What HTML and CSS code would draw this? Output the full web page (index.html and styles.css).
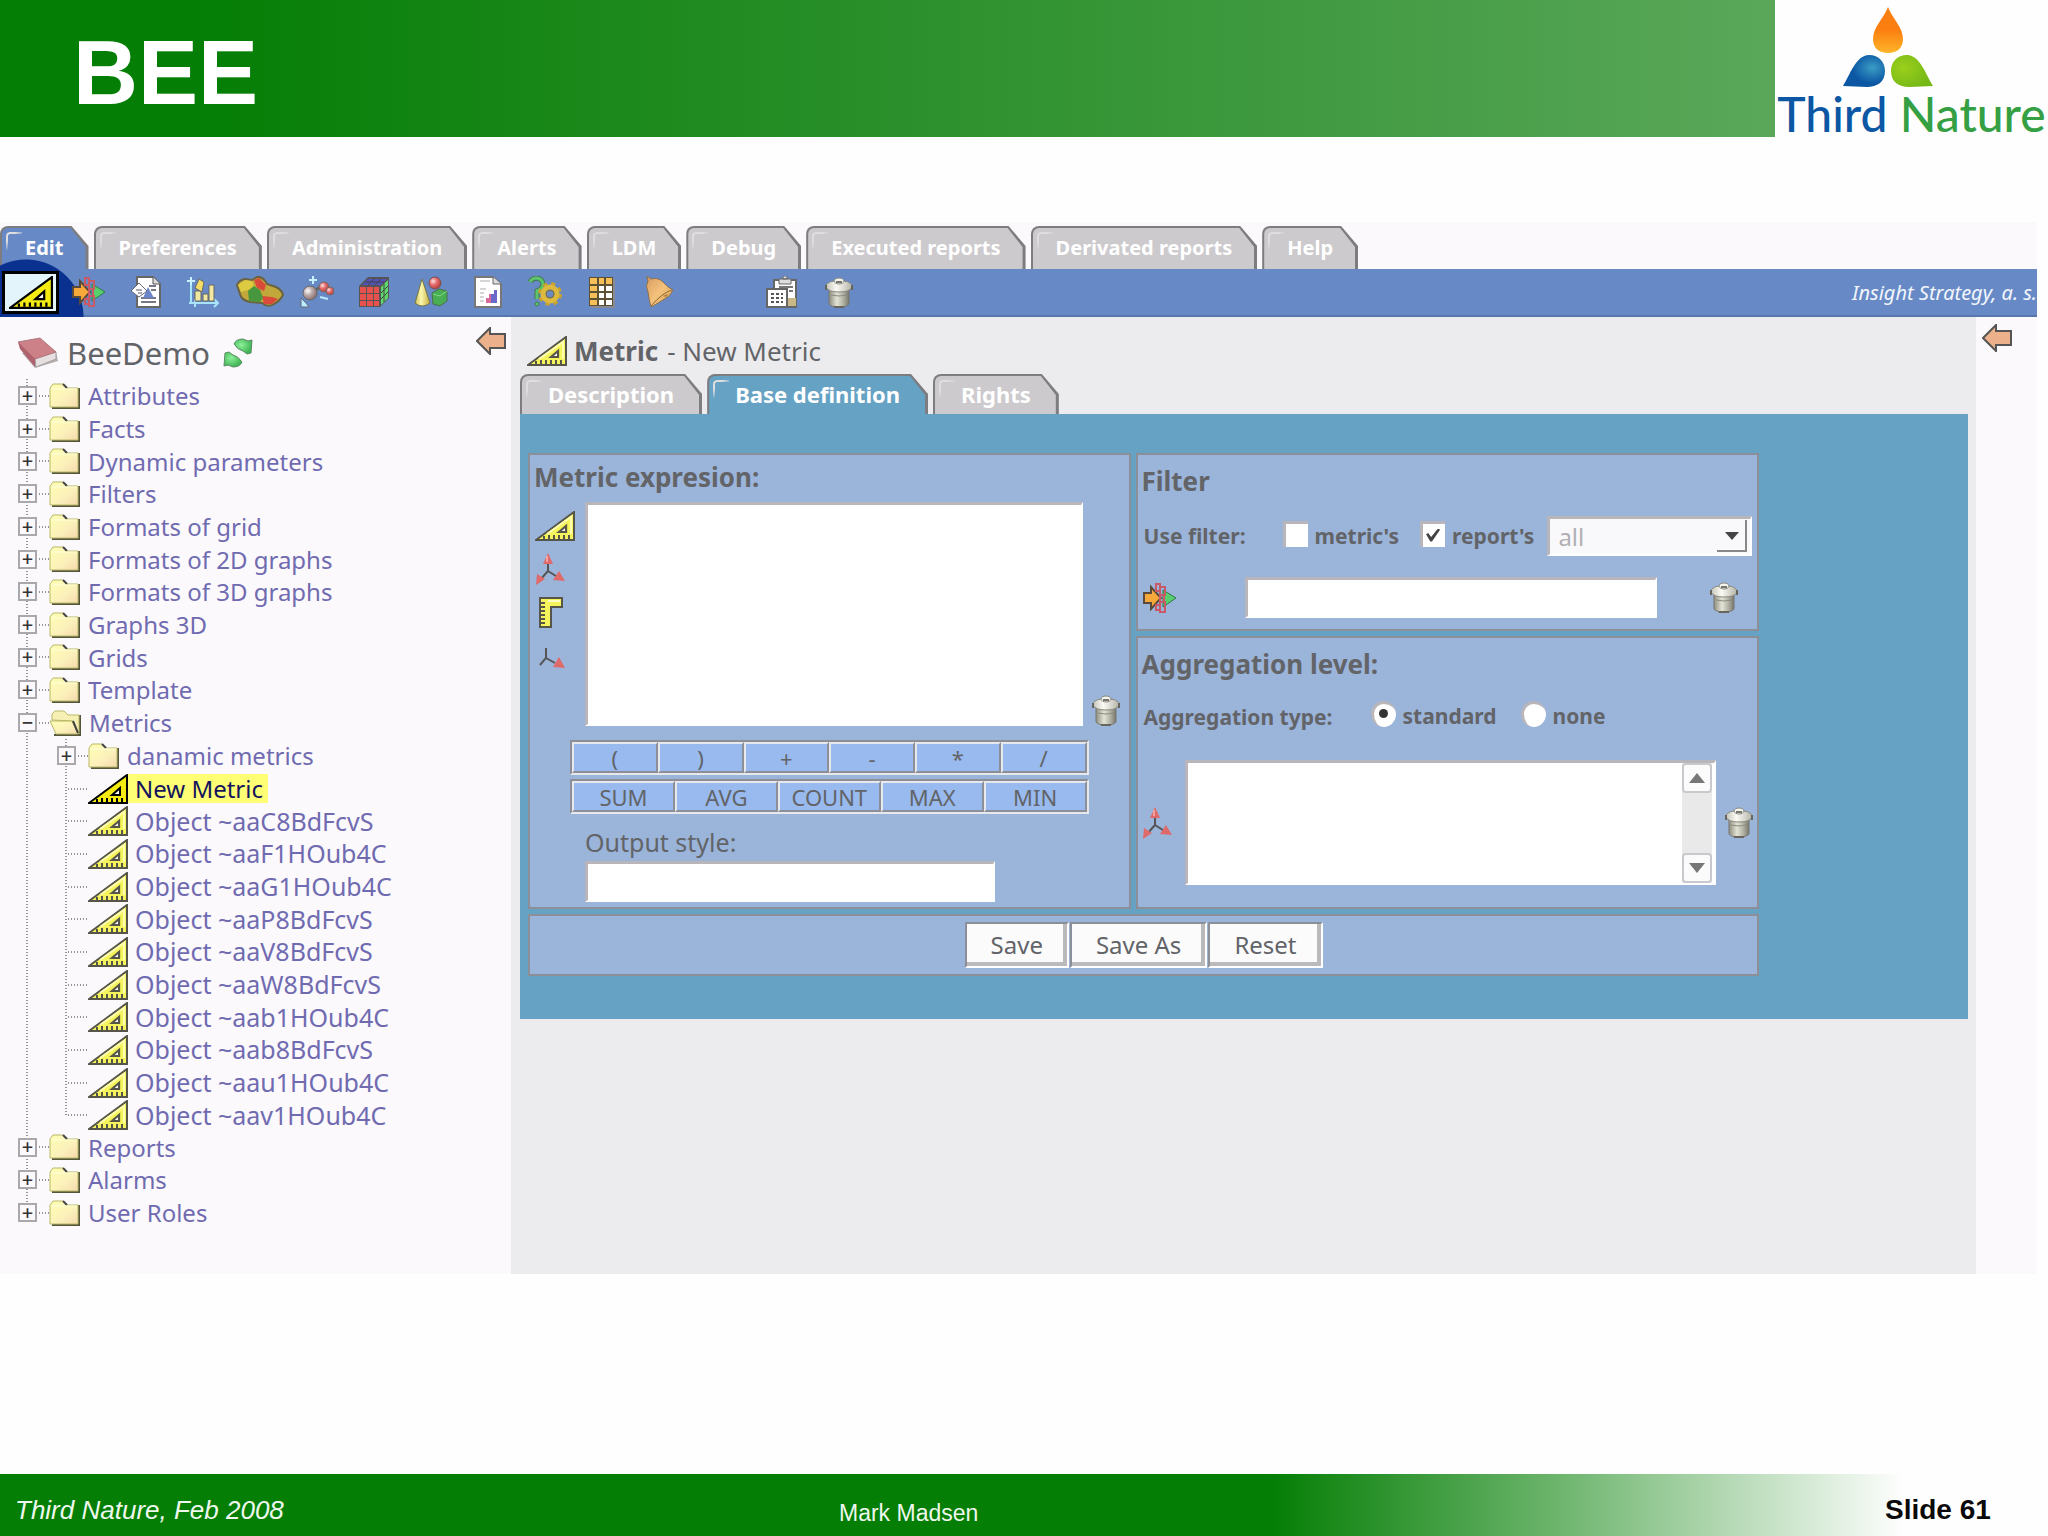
FILE: index.html
```html
<!DOCTYPE html>
<html lang="en">
<head>
<meta charset="utf-8">
<title>BEE - Slide 61</title>
<link rel="stylesheet" href="styles.css">
</head>
<body>
<svg class="defs" aria-hidden="true">
  <defs>
    <linearGradient id="g-orange" x1="0" y1="0" x2="0" y2="1"><stop offset="0.5" stop-color="#fb7f10"/><stop offset="1" stop-color="#fdb52a"/></linearGradient>
    <radialGradient id="g-blue" cx="0.7" cy="0.4" r="0.6"><stop offset="0" stop-color="#3b9cc4"/><stop offset="0.8" stop-color="#0b57a4"/></radialGradient>
    <radialGradient id="g-green" cx="0.3" cy="0.4" r="0.7"><stop offset="0" stop-color="#9bcf1c"/><stop offset="1" stop-color="#74b816"/></radialGradient>
    <linearGradient id="g-folder" x1="0" y1="0" x2="1" y2="1"><stop offset="0" stop-color="#ffffb4"/><stop offset="0.6" stop-color="#fbf0ba"/><stop offset="1" stop-color="#f5d8ae"/></linearGradient>
    <linearGradient id="g-can" x1="0" y1="0" x2="1" y2="0"><stop offset="0" stop-color="#8d8d80"/><stop offset="0.4" stop-color="#e4e4d6"/><stop offset="0.7" stop-color="#b4b4a6"/><stop offset="1" stop-color="#77776e"/></linearGradient>
    <linearGradient id="g-lid" x1="0" y1="0" x2="1" y2="0"><stop offset="0" stop-color="#c4c4b8"/><stop offset="0.4" stop-color="#fbfbf4"/><stop offset="1" stop-color="#b4b4a8"/></linearGradient>
    <linearGradient id="g-bell" x1="0" y1="0" x2="1" y2="1"><stop offset="0" stop-color="#d99a62"/><stop offset="0.5" stop-color="#f4c27c"/><stop offset="1" stop-color="#d8a04c"/></linearGradient>
    <radialGradient id="g-leaf" cx="0.4" cy="0.4" r="0.6"><stop offset="0" stop-color="#8cf09a"/><stop offset="1" stop-color="#3fb454"/></radialGradient>
    <radialGradient id="g-red" cx="0.35" cy="0.35" r="0.65"><stop offset="0" stop-color="#ffe0e0"/><stop offset="0.5" stop-color="#e46a6a"/><stop offset="1" stop-color="#b84444"/></radialGradient>
    <radialGradient id="g-gray" cx="0.35" cy="0.35" r="0.65"><stop offset="0" stop-color="#fff"/><stop offset="0.5" stop-color="#bba8a8"/><stop offset="1" stop-color="#8a7474"/></radialGradient>
    <linearGradient id="g-cone" x1="0" y1="0" x2="1" y2="0"><stop offset="0" stop-color="#c8b848"/><stop offset="0.4" stop-color="#fdf8b0"/><stop offset="1" stop-color="#c4ae3c"/></linearGradient>
  </defs>
  <symbol id="i-metric" viewBox="0 0 40 30">
    <path d="M1 29 39 1V29Z" fill="#f6f45c" stroke="#55554a" stroke-width="2"/>
    <path d="M12 23 36 6V23" fill="none" stroke="#fffeb0" stroke-width="2"/>
    <path d="M20 22 33 12V22Z" fill="#dedc50"/>
    <path d="M24 21 31 15V21Z" fill="#fbf9fc" stroke="#55554a" stroke-width="2"/>
    <path d="M9 28V25M14 28V24M19 28V24M24 28V24M29 28V24M34 28V24" stroke="#55554a" stroke-width="2"/>
  </symbol>
  <symbol id="i-metric-dark" viewBox="0 0 40 30">
    <path d="M1 29 39 1V29Z" fill="#f4ec10" stroke="#000" stroke-width="2"/>
    <path d="M24 21 32 14V21Z" fill="#fff" stroke="#000" stroke-width="2"/>
    <path d="M9 28V25M14 28V24M19 28V24M24 28V24M29 28V24M34 28V24" stroke="#000" stroke-width="2"/>
  </symbol>
  <symbol id="i-folder" viewBox="0 0 31 26">
    <path d="M3 25H30V5" fill="none" stroke="#55553c" stroke-width="2"/>
    <path d="M1 24V5L4 1H14L18 5H29V24Z" fill="url(#g-folder)" stroke="#b9b866" stroke-width="1"/>
    <path d="M14 1 18 5" stroke="#444" stroke-width="2"/>
    <path d="M2 6H28" stroke="#ffffdc"/>
  </symbol>
  <symbol id="i-open" viewBox="0 0 32 26">
    <path d="M5 25H31V5" fill="none" stroke="#55553c" stroke-width="2"/>
    <path d="M3 10V4L6 1H15L19 5H30V24L24 11Z" fill="#f7f0b4" stroke="#b9b866"/>
    <path d="M1 11H23L29 24H7Z" fill="url(#g-folder)" stroke="#b9b866"/>
    <path d="M24 11 29 23" stroke="#444" stroke-width="2"/>
  </symbol>
  <symbol id="i-arrow" viewBox="0 0 30 28">
    <path d="M1 14 14 1V7H29V21H14V27Z" fill="#ecb08a" stroke="#555" stroke-width="2"/>
  </symbol>
  <symbol id="i-axes" viewBox="0 0 30 32">
    <path d="M13 9V18L5 27M13 18 24 25" fill="none" stroke="#555" stroke-width="2"/>
    <path d="M13 0 18 11H8Z" fill="#e06a6a"/><path d="M1 32 2 21 10 26Z" fill="#e06a6a"/><path d="M30 28 24 18 18 27Z" fill="#e06a6a"/>
    <path d="M12 3V9" stroke="#f2a0a0" stroke-width="2"/>
  </symbol>
  <symbol id="i-axis" viewBox="0 0 26 20">
    <path d="M7 0V10L1 17M7 10 16 15" fill="none" stroke="#555" stroke-width="2"/>
    <path d="M26 20 20 9 14 19Z" fill="#e06a6a"/>
  </symbol>
  <symbol id="i-ruler" viewBox="0 0 24 31">
    <path d="M1 1H23V10H12V30H1Z" fill="#f6f45c" stroke="#55554a" stroke-width="2"/>
    <path d="M9 4H21" stroke="#fffec0" stroke-width="2"/>
    <path d="M2 6H6M2 10H6M2 14H6M2 18H6M2 22H6M2 26H6" stroke="#55554a" stroke-width="2"/>
  </symbol>
  <symbol id="i-trash" viewBox="0 0 28 31">
    <path d="M4 12H24V27Q22 30 14 30Q6 30 4 27Z" fill="url(#g-can)" stroke="#77776e"/>
    <path d="M1 10Q1 5 9 4H19Q27 5 27 10Q25 15 14 15Q3 15 1 10Z" fill="url(#g-lid)" stroke="#8a8a82"/>
    <path d="M1 8V13M27 8V13M9 30H19" stroke="#66665e" stroke-width="2"/>
    <ellipse cx="14" cy="4" rx="5" ry="3" fill="#f4f4ee" stroke="#8a8a82"/>
    <path d="M11 5H17" stroke="#77776e" stroke-width="2"/>
    <path d="M6 18Q14 20 22 18" fill="none" stroke="#8a8a80"/>
  </symbol>
  <symbol id="i-filter" viewBox="0 0 34 30">
    <path d="M20 7 33 15 20 24Z" fill="#56cf6c" stroke="#2f7a4a"/>
    <path d="M1 10H8V4L18 15 8 26V20H1Z" fill="#f6a93a" stroke="#5a4a3a" stroke-width="2"/>
    <path d="M13 1H17V8H13ZM17 4H22V12H17ZM13 22H17V27H13ZM17 19H22V29H17ZM17 12H21V19H17Z" fill="none" stroke="#c75a66" stroke-width="2"/>
  </symbol>
</svg>

<header class="slide-head">
  <h1 class="slide-title">BEE</h1>
  <div class="logo">
    <svg class="logo-mark" viewBox="0 0 90 80" aria-hidden="true">
      <path d="M45 0C49 11 60 20 60 32C60 41 54 46 45 46S30 41 30 32C30 20 41 11 45 0Z" fill="url(#g-orange)"/>
      <path d="M0 79C7 68 13 48 26 48C36 48 42 55 42 64C42 75 34 80 24 80Z" fill="url(#g-blue)"/>
      <path d="M90 79C83 68 77 48 64 48C54 48 48 55 48 64C48 75 56 80 66 80Z" fill="url(#g-green)"/>
    </svg>
    <p class="logo-text"><span class="logo-third">Third</span> <span class="logo-nature">Nature</span></p>
  </div>
</header>

<div class="app">
  <nav class="tabs tabs-main" aria-label="Main">
    <button class="tab tab-edit">Edit</button>
    <button class="tab">Preferences</button>
    <button class="tab">Administration</button>
    <button class="tab">Alerts</button>
    <button class="tab">LDM</button>
    <button class="tab">Debug</button>
    <button class="tab">Executed reports</button>
    <button class="tab">Derivated reports</button>
    <button class="tab">Help</button>
  </nav>

  <div class="toolbar">
    <span class="spotlight"></span>
    <button class="tool tool-current" aria-label="Metric"><svg width="44" height="33"><use href="#i-metric-dark"/></svg></button>
    <button class="tool" aria-label="Filter"><svg width="34" height="30"><use href="#i-filter"/></svg></button>
    <button class="tool" aria-label="Template"><svg width="32" height="32" viewBox="0 0 32 32">
      <path d="M7 1H23L30 8V31H7Z" fill="#fff" stroke="#666" stroke-width="2"/><path d="M23 1V8H30" fill="#ddd" stroke="#555"/>
      <path d="M11 26H26M11 22H26M19 10H26M21 14H26" stroke="#778" stroke-width="2"/><path d="M13 22 18 11 24 22Z" fill="#6c84c8"/>
      <path d="M1 15 9 7 17 15 9 21Z" fill="#fff" stroke="#667" stroke-width="1"/><path d="M6 14H12M8 17H12" stroke="#556"/></svg></button>
    <button class="tool" aria-label="2D graph format"><svg width="32" height="32" viewBox="0 0 32 32">
      <path d="M4 7V28M2 27H30M27 23 31 27 27 31M8 31V23" fill="none" stroke="#a8e4fa" stroke-width="2"/><path d="M4 1V9M0 5H8" stroke="#c8f2ff" stroke-width="2"/>
      <path d="M8 15H14V25H8ZM16 18H21V25H16ZM22 9H27V25H22Z" fill="#f1e9a0" stroke="#666"/><path d="M12 3 17 6 15 16 8 12Z" fill="#f4dd66" stroke="#666"/></svg></button>
    <button class="tool" aria-label="Map"><svg width="48" height="32" viewBox="0 0 48 32">
      <path d="M1 9Q3 4 9 3L16 4 21 1Q27 0 31 8L40 11Q46 14 47 19 44 25 38 28 32 32 26 27L14 26Q5 24 4 18Z" fill="#c2a83a" stroke="#6a6240" stroke-width="2"/>
      <path d="M2 9 9 4 16 5 18 10 12 14 5 16Z" fill="#dccb40"/>
      <path d="M18 4 23 2 30 9 28 15 21 12ZM26 20 36 21 42 23 36 28 28 28Z" fill="#d94a3a"/><path d="M12 15 18 10 24 14 27 22 24 26 13 25Z" fill="#48963e"/></svg></button>
    <button class="tool" aria-label="Molecule"><svg width="34" height="32" viewBox="0 0 34 32">
      <path d="M13 0V8M9 4H17" stroke="#c8f2ff" stroke-width="2"/><path d="M10 16 22 11 30 15" stroke="#666" stroke-width="3" fill="none"/>
      <circle cx="10" cy="17" r="7" fill="url(#g-gray)" stroke="#666"/><circle cx="24" cy="11" r="5" fill="url(#g-red)" stroke="#766"/><circle cx="30" cy="15" r="4" fill="url(#g-red)" stroke="#766"/>
      <path d="M20 21 28 23" stroke="#b9ecff" stroke-width="2"/><path d="M1 22V31H9L6 27Z" fill="#b9ecff" stroke="#667"/></svg></button>
    <button class="tool" aria-label="Cube"><svg width="32" height="32" viewBox="0 0 32 32">
      <path d="M1 10 10 1H31V22L22 31H1Z" fill="#555"/><path d="M2 11H8V17H2ZM9 11H15V17H9ZM16 11H21V17H16ZM2 18H8V24H2ZM9 18H15V24H9ZM16 18H21V24H16ZM2 25H8V30H2ZM9 25H15V30H9ZM16 25H21V30H16Z" fill="#e8514e"/>
      <path d="M4 9 10 3H29L23 9Z" fill="#5452bc"/><path d="M10 9 16 3M17 9 23 3M7 6H26" stroke="#444"/><path d="M23 11 30 4V22L23 29Z" fill="#5fd86c"/><path d="M23 17 30 10M23 23 30 16M26 8V26" stroke="#444"/></svg></button>
    <button class="tool" aria-label="3D shapes"><svg width="34" height="32" viewBox="0 0 34 32">
      <path d="M18 17 25 13 33 15V25L26 30 19 28Z" fill="#49ad53" stroke="#4c6e4c"/><path d="M19 18 26 20 33 15" fill="none" stroke="#7fd888"/><circle cx="21" cy="7" r="6" fill="url(#g-red)" stroke="#7a5050"/><path d="M8 3 16 27Q8 33 1 27Z" fill="url(#g-cone)" stroke="#777748"/></svg></button>
    <button class="tool" aria-label="Report"><svg width="28" height="32" viewBox="0 0 28 32">
      <path d="M1 1H19L27 8V31H1Z" fill="#fff" stroke="#777" stroke-width="2"/><path d="M19 1V8H27" fill="#ddd" stroke="#666"/><path d="M6 5H16M6 13H12M6 17H10M6 21H10M6 25H10" stroke="#aaa"/>
      <path d="M12 27V22H15V18H18V27Z" fill="#d86a9a"/><path d="M17 27V18H20V14H23V27Z" fill="#6a6ac8"/></svg></button>
    <button class="tool" aria-label="Settings"><svg width="34" height="32" viewBox="0 0 34 32">
      <path d="M2 6Q4 2 9 2Q15 3 15 9Q14 13 9 15V23" fill="none" stroke="#48784c" stroke-width="5"/><path d="M2 6Q4 2 9 2Q15 3 15 9Q14 13 9 15V23" fill="none" stroke="#5cc46c" stroke-width="3"/><circle cx="9" cy="28" r="2" fill="#5cc46c" stroke="#48784c"/>
      <circle cx="22" cy="18" r="10" fill="none" stroke="#c8a22c" stroke-width="4" stroke-dasharray="4 4"/><circle cx="22" cy="18" r="7" fill="none" stroke="#ddb93e" stroke-width="5"/><circle cx="22" cy="18" r="4" fill="none" stroke="#806a2c"/></svg></button>
    <button class="tool" aria-label="Grid"><svg width="28" height="32" viewBox="0 0 28 32">
      <path d="M3 3H27V32H3Z" fill="#8a8a94"/><path d="M1 1H25V30H1Z" fill="#5c5134"/><path d="M2 2H9V8H2ZM11 2H16V8H11ZM18 2H24V8H18ZM2 10H9V15H2ZM2 17H9V22H2ZM2 24H9V29H2Z" fill="#f6bf58"/>
      <path d="M11 10H16V15H11ZM18 10H24V15H18ZM11 17H16V22H11ZM18 17H24V22H18ZM11 24H16V29H11ZM18 24H24V29H18Z" fill="#fff"/></svg></button>
    <button class="tool" aria-label="Alarm"><svg width="32" height="32" viewBox="0 0 32 32">
      <path d="M4 0 8 3Q15 1 20 6Q24 11 30 14Q28 20 20 24Q12 29 8 31Q6 24 5 16Q2 10 5 5Z" fill="url(#g-bell)" stroke="#8a7050"/><path d="M29 14Q19 17 8 30" fill="none" stroke="#8a6a3c"/><path d="M20 20Q24 22 25 18" fill="#a87a3c"/></svg></button>
    <span class="tool-gap"></span>
    <button class="tool" aria-label="Paste"><svg width="32" height="32" viewBox="0 0 32 32">
      <path d="M8 4H30V31H8Z" fill="#fff" stroke="#666" stroke-width="2"/><path d="M22 22H30V30H22Z" fill="#c8b888"/><path d="M13 3H25V8H13ZM17 0H21V3H17Z" fill="#ddd" stroke="#666" stroke-width="1"/><path d="M13 11H27M23 15H27" stroke="#777" stroke-width="2"/>
      <path d="M1 13H21V31H1Z" fill="#fff" stroke="#666" stroke-width="2"/><path d="M5 18H17M5 22H17M5 26H17" stroke="#555" stroke-width="2" stroke-dasharray="3 2"/></svg></button>
    <button class="tool" aria-label="Delete"><svg width="28" height="31"><use href="#i-trash"/></svg></button>
    <p class="company">Insight Strategy, a. s.</p>
  </div>

  <div class="columns">
    <aside class="sidebar">
      <div class="brand">
        <svg width="42" height="32" viewBox="0 0 42 32" aria-hidden="true"><path d="M5 16 18 31 41 24 39 15Z" fill="#b4aeae"/><path d="M18 21 39 15V22L19 30Z" fill="#e6e0e0" stroke="#a8a0a0"/><path d="M1 5 23 1 39 15 18 22Z" fill="#cc8088" stroke="#b07880"/><path d="M1 5 18 22V30L3 12Z" fill="#b0626e"/></svg>
        <span class="brand-name">BeeDemo</span>
        <svg width="30" height="30" viewBox="0 0 30 30" aria-hidden="true"><path d="M11 6Q13 1 20 1L25 3 29 2 28 15 24 16 20 13Q15 12 11 6Z" fill="url(#g-leaf)" stroke="#5c8c64"/><path d="M19 24Q17 29 10 29L5 27 1 28 2 15 6 14 10 17Q15 18 19 24Z" fill="url(#g-leaf)" stroke="#5c8c64"/></svg>
        <button class="collapse" aria-label="Hide tree"><svg width="30" height="28"><use href="#i-arrow"/></svg></button>
      </div>
      <ul class="tree">
        <li><div class="node"><button class="toggle" aria-label="Expand">+</button><i class="dots"></i><svg width="31" height="26"><use href="#i-folder"/></svg><a href="#">Attributes</a></div></li>
        <li><div class="node"><button class="toggle" aria-label="Expand">+</button><i class="dots"></i><svg width="31" height="26"><use href="#i-folder"/></svg><a href="#">Facts</a></div></li>
        <li><div class="node"><button class="toggle" aria-label="Expand">+</button><i class="dots"></i><svg width="31" height="26"><use href="#i-folder"/></svg><a href="#">Dynamic parameters</a></div></li>
        <li><div class="node"><button class="toggle" aria-label="Expand">+</button><i class="dots"></i><svg width="31" height="26"><use href="#i-folder"/></svg><a href="#">Filters</a></div></li>
        <li><div class="node"><button class="toggle" aria-label="Expand">+</button><i class="dots"></i><svg width="31" height="26"><use href="#i-folder"/></svg><a href="#">Formats of grid</a></div></li>
        <li><div class="node"><button class="toggle" aria-label="Expand">+</button><i class="dots"></i><svg width="31" height="26"><use href="#i-folder"/></svg><a href="#">Formats of 2D graphs</a></div></li>
        <li><div class="node"><button class="toggle" aria-label="Expand">+</button><i class="dots"></i><svg width="31" height="26"><use href="#i-folder"/></svg><a href="#">Formats of 3D graphs</a></div></li>
        <li><div class="node"><button class="toggle" aria-label="Expand">+</button><i class="dots"></i><svg width="31" height="26"><use href="#i-folder"/></svg><a href="#">Graphs 3D</a></div></li>
        <li><div class="node"><button class="toggle" aria-label="Expand">+</button><i class="dots"></i><svg width="31" height="26"><use href="#i-folder"/></svg><a href="#">Grids</a></div></li>
        <li><div class="node"><button class="toggle" aria-label="Expand">+</button><i class="dots"></i><svg width="31" height="26"><use href="#i-folder"/></svg><a href="#">Template</a></div></li>
        <li><div class="node"><button class="toggle" aria-label="Collapse">−</button><i class="dots"></i><svg width="32" height="26"><use href="#i-open"/></svg><a href="#">Metrics</a></div>
          <ul class="tree tree-sub">
            <li><div class="node"><button class="toggle" aria-label="Expand">+</button><i class="dots"></i><svg width="31" height="26"><use href="#i-folder"/></svg><a href="#">danamic metrics</a></div></li>
            <li><div class="node leaf"><i class="dots"></i><svg width="40" height="30"><use href="#i-metric-dark"/></svg><a class="current" href="#">New Metric</a></div></li>
            <li><div class="node leaf"><i class="dots"></i><svg width="40" height="30"><use href="#i-metric"/></svg><a href="#">Object ~aaC8BdFcvS</a></div></li>
            <li><div class="node leaf"><i class="dots"></i><svg width="40" height="30"><use href="#i-metric"/></svg><a href="#">Object ~aaF1HOub4C</a></div></li>
            <li><div class="node leaf"><i class="dots"></i><svg width="40" height="30"><use href="#i-metric"/></svg><a href="#">Object ~aaG1HOub4C</a></div></li>
            <li><div class="node leaf"><i class="dots"></i><svg width="40" height="30"><use href="#i-metric"/></svg><a href="#">Object ~aaP8BdFcvS</a></div></li>
            <li><div class="node leaf"><i class="dots"></i><svg width="40" height="30"><use href="#i-metric"/></svg><a href="#">Object ~aaV8BdFcvS</a></div></li>
            <li><div class="node leaf"><i class="dots"></i><svg width="40" height="30"><use href="#i-metric"/></svg><a href="#">Object ~aaW8BdFcvS</a></div></li>
            <li><div class="node leaf"><i class="dots"></i><svg width="40" height="30"><use href="#i-metric"/></svg><a href="#">Object ~aab1HOub4C</a></div></li>
            <li><div class="node leaf"><i class="dots"></i><svg width="40" height="30"><use href="#i-metric"/></svg><a href="#">Object ~aab8BdFcvS</a></div></li>
            <li><div class="node leaf"><i class="dots"></i><svg width="40" height="30"><use href="#i-metric"/></svg><a href="#">Object ~aau1HOub4C</a></div></li>
            <li><div class="node leaf"><i class="dots"></i><svg width="40" height="30"><use href="#i-metric"/></svg><a href="#">Object ~aav1HOub4C</a></div></li>
          </ul>
        </li>
        <li><div class="node"><button class="toggle" aria-label="Expand">+</button><i class="dots"></i><svg width="31" height="26"><use href="#i-folder"/></svg><a href="#">Reports</a></div></li>
        <li><div class="node"><button class="toggle" aria-label="Expand">+</button><i class="dots"></i><svg width="31" height="26"><use href="#i-folder"/></svg><a href="#">Alarms</a></div></li>
        <li><div class="node"><button class="toggle" aria-label="Expand">+</button><i class="dots"></i><svg width="31" height="26"><use href="#i-folder"/></svg><a href="#">User Roles</a></div></li>
      </ul>
    </aside>

    <main class="main">
      <h2 class="object-title"><svg width="40" height="30" aria-hidden="true"><use href="#i-metric"/></svg><strong>Metric</strong> <span>- New Metric</span></h2>
      <div class="tabs tabs-inner">
        <button class="tab">Description</button>
        <button class="tab tab-base">Base definition</button>
        <button class="tab">Rights</button>
      </div>
      <form class="editor">
        <div class="panels">
          <section class="panel expression">
            <h3><label for="expr">Metric expresion:</label></h3>
            <div class="expr-body">
              <div class="expr-icons">
                <button type="button" class="icon" aria-label="Insert metric"><svg width="40" height="30"><use href="#i-metric"/></svg></button>
                <button type="button" class="icon" aria-label="Insert attributes"><svg width="30" height="32"><use href="#i-axes"/></svg></button>
                <button type="button" class="icon" aria-label="Insert fact"><svg width="32" height="31"><use href="#i-ruler"/></svg></button>
                <button type="button" class="icon" aria-label="Insert attribute"><svg width="34" height="20"><use href="#i-axis"/></svg></button>
              </div>
              <textarea id="expr" class="field"></textarea>
              <button type="button" class="icon" aria-label="Clear expression"><svg width="28" height="31"><use href="#i-trash"/></svg></button>
            </div>
            <div class="ops">
              <button type="button">(</button><button type="button">)</button><button type="button">+</button><button type="button">-</button><button type="button">*</button><button type="button">/</button>
            </div>
            <div class="ops">
              <button type="button">SUM</button><button type="button">AVG</button><button type="button">COUNT</button><button type="button">MAX</button><button type="button">MIN</button>
            </div>
            <div class="output">
              <label for="style">Output style:</label>
              <input id="style" class="field" type="text">
            </div>
          </section>

          <section class="panel filter">
            <h3>Filter</h3>
            <div class="line use-filter">
              <span class="lead">Use filter:</span>
              <label><input type="checkbox">metric's</label>
              <label><input type="checkbox" checked>report's</label>
              <span class="picker"><select class="field" aria-label="Filter scope" disabled><option>all</option></select><svg width="30" height="32" viewBox="0 0 30 32" aria-hidden="true"><path d="M0 31H29V0" fill="none" stroke="#888" stroke-width="2"/><path d="M8 12H22L15 20Z" fill="#444"/></svg></span>
            </div>
            <div class="line filter-value">
              <button type="button" class="icon" aria-label="Pick filter"><svg width="34" height="30"><use href="#i-filter"/></svg></button>
              <input class="field" type="text" aria-label="Filter">
              <button type="button" class="icon" aria-label="Clear filter"><svg width="28" height="31"><use href="#i-trash"/></svg></button>
            </div>
          </section>

          <section class="panel aggregation">
            <h3>Aggregation level:</h3>
            <div class="line agg-type">
              <span class="lead">Aggregation type:</span>
              <label><input type="radio" name="agg" checked>standard</label>
              <label><input type="radio" name="agg">none</label>
            </div>
            <div class="agg-list">
              <button type="button" class="icon" aria-label="Pick attributes"><svg width="30" height="32"><use href="#i-axes"/></svg></button>
              <div class="list field">
                <select size="4" aria-label="Aggregation level"></select>
                <div class="scroll">
                  <button type="button" aria-label="Scroll up"><svg width="16" height="10" viewBox="0 0 16 10"><path d="M0 10H16L8 0Z" fill="#777"/></svg></button>
                  <button type="button" aria-label="Scroll down"><svg width="16" height="10" viewBox="0 0 16 10"><path d="M0 0H16L8 10Z" fill="#777"/></svg></button>
                </div>
              </div>
              <button type="button" class="icon" aria-label="Clear level"><svg width="28" height="31"><use href="#i-trash"/></svg></button>
            </div>
          </section>

          <div class="panel actions">
            <button type="submit">Save</button>
            <button type="button">Save As</button>
            <button type="reset">Reset</button>
          </div>
        </div>
      </form>
    </main>

    <aside class="rail">
      <button class="collapse" aria-label="Show panel"><svg width="30" height="28"><use href="#i-arrow"/></svg></button>
    </aside>
  </div>
</div>

<footer class="slide-foot">
  <span class="foot-left">Third Nature, Feb 2008</span>
  <span class="foot-mid">Mark Madsen</span>
  <span class="foot-right">Slide 61</span>
</footer>
</body>
</html>
```
FILE: styles.css
```css
* { box-sizing: border-box; }

body {
  margin: 0;
  min-height: 100vh;
  display: flex;
  flex-direction: column;
  background: #fefefe;
  color: #626468;
  font-family: "Noto Sans", sans-serif;
  font-size: 24px;
}

h1, h2, h3, p, ul { margin: 0; padding: 0; }
ul { list-style: none; }
button, input, select, textarea { font: inherit; color: inherit; margin: 0; border-radius: 0; }
button { padding: 0; border: 0; background: none; }
svg { display: block; flex: none; }
.defs { position: absolute; width: 0; height: 0; }

/* slide header */
.slide-head { display: flex; height: 137px; }
.slide-title {
  flex: 1;
  padding-left: 73px;
  background: linear-gradient(90deg, #047e04 10%, #2f922f 55%, #5aa75a);
  color: #fff;
  font: bold 90px/146px "Liberation Sans", Arial, sans-serif;
}
.logo { width: 273px; padding-top: 7px; display: flex; flex-direction: column; align-items: center; }
.logo-mark { width: 90px; height: 80px; margin-right: 48px; }
.logo-text { font: 500 48px/54px Lato, sans-serif; white-space: nowrap; }
.logo-third { color: #0b57a4; }
.logo-nature { color: #35a043; }

/* application frame */
.app { margin: 85px 11px 0 0; background: #fbf9fc; }

.tabs { display: flex; align-items: flex-end; gap: 5px; }
.tabs-main { padding-top: 4px; font-size: 20px; }
.tab {
  --fill: #cccacd;
  position: relative;
  z-index: 0;
  height: 43px;
  padding: 0 25px;
  background: #7d7c80;
  color: #fff;
  font-weight: bold;
  white-space: nowrap;
  border-top-left-radius: 8px;
  clip-path: polygon(0 0, calc(100% - 17px) 0, 100% 20px, 100% 100%, 0 100%);
}
.tab::before {
  content: "";
  position: absolute;
  z-index: -1;
  inset: 2px 3px 0 2px;
  background: var(--fill);
  border-top-left-radius: 6px;
  clip-path: polygon(0 0, calc(100% - 15px) 0, 100% 19px, 100% 100%, 0 100%);
}
.tab::after {
  content: "";
  position: absolute;
  left: 6px;
  top: 6px;
  width: 14px;
  height: 16px;
  border: solid #dedde0;
  border-width: 2px 0 0 2px;
  border-top-left-radius: 4px;
  mask: linear-gradient(135deg, #000 30%, transparent 60%);
}
.tab-edit { --fill: #678ac6; }
.tab-base { --fill: #66a2c4; }

.toolbar {
  position: relative;
  display: flex;
  align-items: center;
  height: 48px;
  background: #678ac6;
  border-bottom: 2px solid #5877ae;
}
/* blue disc that draws the eye to the metric tool */
.spotlight {
  position: absolute;
  left: 0;
  top: -10px;
  width: 85px;
  height: 58px;
  background: radial-gradient(circle at 26px 58px, #0a3190 57px, transparent 58px);
}
.tool { position: relative; width: 57px; display: flex; justify-content: center; }
.tool-current {
  width: 57px;
  height: 43px;
  margin: 0 1px 0 2px;
  align-items: center;
  background: #e3f5fb;
  border: 3px solid #000;
}
.tool-gap { width: 66px; }
.company { margin-left: auto; color: #f2f6fc; font-style: italic; font-size: 20px; }

.columns { display: flex; align-items: stretch; }
.sidebar { flex: 0 0 511px; padding-bottom: 45px; }
.rail { flex: 0 0 3%; padding: 7px 0 0 6px; }

.brand { display: flex; align-items: center; height: 62px; padding: 10px 5px 0 17px; }
.brand-name { margin: 0 13px 0 8px; font-size: 31px; }
.brand .collapse { margin-left: auto; align-self: flex-start; }

/* object tree */
.tree {
  background: repeating-linear-gradient(#939398 0 1px, transparent 1px 3px) 26px 0 / 2px calc(100% - 16px) no-repeat;
}
.tree-sub { margin-left: 39px; }
.node { display: flex; align-items: center; height: 33px; padding-left: 18px; white-space: nowrap; }
li:nth-child(3n) > .node { height: 32px; }
.toggle {
  width: 19px;
  height: 19px;
  background: #fbf9fc;
  border: 2px solid #a9a8ac;
  color: #333;
  font-weight: 500;
  font-size: 20px;
  line-height: 14px;
}
.dots {
  width: 12px;
  height: 2px;
  background: repeating-linear-gradient(90deg, transparent 0 2px, #939398 2px 3px);
}
.node a { margin-left: 8px; color: #706bb0; text-decoration: none; }
.leaf { padding-left: 27px; }
.leaf .dots { width: 22px; }
.leaf a { margin-left: 0; padding: 0 5px 0 7px; font-size: 25px; line-height: 29px; }
.leaf .current { background: #ffff76; color: #14145c; font-size: 24px; }

/* main editor */
.main { flex: 1; min-width: 0; padding: 0 8px 0 9px; background: #ecebed; }
.object-title {
  display: flex;
  align-items: center;
  height: 57px;
  padding: 10px 0 0 7px;
  font-size: 26px;
  font-weight: normal;
}
.object-title strong { margin: 0 9px 0 7px; }
.tabs-inner { font-size: 22px; }
.tabs-inner .tab { height: 40px; padding: 0 28px; }

.editor { padding: 39px 0 43px 8px; background: #66a2c4; }
.panels { display: grid; grid-template-columns: 602fr 623fr; gap: 5px; width: 85.5%; }
.panel { background: #9bb4da; border: 2px solid #8c8f97; }
.panel h3 { font-size: 26px; line-height: 35px; }
.expression { grid-row: span 2; padding: 5px 0; }
.expression h3 { padding-left: 4px; }

.field { background: #fff; border: solid #fff; border-width: 3px 2px 2px 3px; border-top-color: #b8b6ba; border-left-color: #b8b6ba; outline: 0; }
.icon { display: flex; justify-content: center; align-items: center; }

.expr-body { display: flex; padding: 7px 0 0; }
.expr-icons { width: 55px; display: flex; flex-direction: column; align-items: flex-start; gap: 12px; padding: 9px 0 0 5px; }
.expr-icons .icon:last-child { padding-top: 8px; }
.expr-body .field { flex: 1; min-width: 0; height: 224px; resize: none; }
.expr-body > .icon { width: 46px; align-self: flex-end; }

.ops {
  display: flex;
  margin: 14px 40px 0;
  border: 2px solid;
  border-color: #8c8f97 #e6e8ec #e6e8ec #8c8f97;
}
.ops + .ops { margin-top: 4px; }
.ops button {
  flex: 1;
  height: 31px;
  background: #98baee;
  border: 2px solid;
  border-color: #e6e8ec #8c8f97 #8c8f97 #e6e8ec;
  font-size: 22px;
  line-height: 26px;
}
.output { padding: 10px 55px 0; display: flex; flex-direction: column; align-items: flex-start; }
.output label { font-size: 25px; line-height: 37px; }
.output .field { width: 84%; height: 41px; }

.line { display: flex; align-items: center; font-size: 21px; font-weight: bold; }
.line label { display: flex; align-items: flex-start; gap: 7px; line-height: 31px; }
.line label input { appearance: none; width: 25px; height: 26px; background: #fff; border: solid #b8b6ba; border-width: 3px 0 0 3px; }
.line label input::before { content: ""; display: block; }
input[type="checkbox"]:checked::before {
  width: 14px;
  height: 13px;
  margin: 5px 3px;
  background: #444;
  clip-path: polygon(0 45%, 15% 35%, 36% 65%, 85% 0, 100% 10%, 42% 100%, 30% 100%);
}
.line label input[type="radio"] { border-radius: 50%; }
input[type="radio"]:checked::before { width: 9px; height: 9px; margin: 5px; background: #333; border-radius: 50%; }

.filter { padding: 9px 5px 9px 4px; }
.use-filter { padding: 17px 0 0 2px; }
.use-filter label { margin-right: 21px; }
.use-filter .lead { width: 139px; }
.use-filter label + label { margin-right: 13px; }
.picker { flex: 1; display: grid; align-items: center; }
.picker > * { grid-area: 1 / 1; }
.picker select { appearance: none; height: 40px; width: 100%; padding: 0 8px; color: #b0b0b4; opacity: 1; background: #f9f9fc; font-size: 24px; font-weight: normal; }
.picker svg { justify-self: end; margin-right: 5px; position: relative; }
.filter-value { padding: 21px 0 0 1px; justify-content: space-between; }
.filter-value .field { width: 412px; height: 41px; margin-left: 15px; }
.filter-value .icon:last-child { margin-right: 14px; }

.aggregation { padding: 9px 4px 20px 4px; }
.agg-type { padding: 19px 0 0 2px; }
.agg-type .lead { width: 227px; }
.agg-type label { margin-right: 24px; }
.agg-list { display: flex; align-items: center; padding-top: 28px; }
.agg-list .icon:first-child { margin-right: 13px; }
.agg-list .icon:last-child { margin-left: 9px; }
.list { flex: 1; display: flex; height: 125px; padding-right: 2px; }
.list select { flex: 1; border: 0; background: none; overflow: hidden; }
.scroll { width: 30px; display: flex; flex-direction: column; justify-content: space-between; background: #e9e9ea; }
.scroll button { height: 30px; display: flex; align-items: center; justify-content: center; background: #fbfbfc; border: 2px solid #c9c8cc; border-radius: 4px; }

.actions { grid-column: span 2; display: flex; justify-content: center; gap: 1px; padding: 6px 0; }
.actions button {
  height: 46px;
  padding: 0 24px 2px;
  background: #fbfbfc;
  border: 2px solid;
  border-color: #8c8f97 #fff #fff #8c8f97;
  box-shadow: inset -4px -4px #bab9bc;
}

/* slide footer */
.slide-foot {
  margin-top: auto;
  display: grid;
  grid-template-columns: 839fr 1046fr 163fr;
  align-items: center;
  height: 62px;
  padding-top: 10px;
  background: linear-gradient(90deg, #047e04 62%, #6cb46c 76%, #fefefe 93%);
  font-family: "Liberation Sans", Arial, sans-serif;
  color: #eef8ee;
}
.foot-left { padding-left: 15px; font-size: 26px; font-style: italic; }
.foot-mid { font-size: 23px; padding-top: 6px; }
.foot-right { font-size: 28px; font-weight: bold; color: #0a0a0a; }
```
